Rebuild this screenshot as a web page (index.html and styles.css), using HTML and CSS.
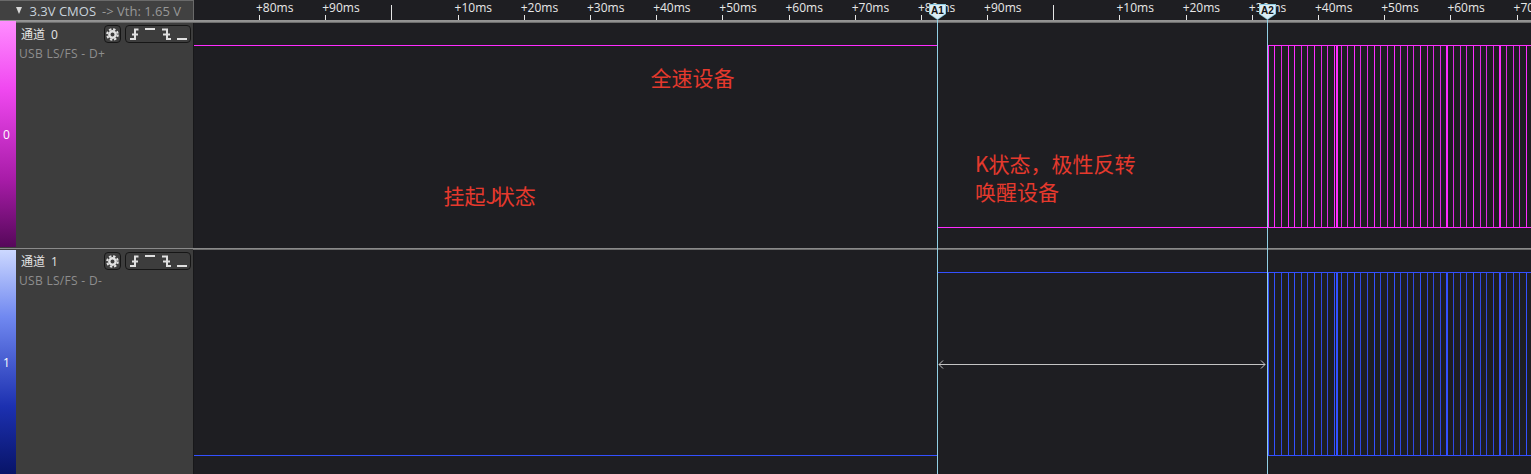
FILE: index.html
```html
<!DOCTYPE html>
<html lang="zh">
<head>
<meta charset="utf-8">
<title>Logic capture</title>
<link rel="stylesheet" href="styles.css">
</head>
<body>
<div class="app">
  <header class="top">
    <div class="group"><span class="tri"></span><span class="volt">3.3V CMOS</span><span class="vth">-&gt; Vth: 1.65 V</span></div>
    <div class="ruler">
      <div class="cell"><span>+80ms</span></div>
      <div class="cell"><span>+90ms</span></div>
      <div class="cell major"></div>
      <div class="cell"><span>+10ms</span></div>
      <div class="cell"><span>+20ms</span></div>
      <div class="cell"><span>+30ms</span></div>
      <div class="cell"><span>+40ms</span></div>
      <div class="cell"><span>+50ms</span></div>
      <div class="cell"><span>+60ms</span></div>
      <div class="cell"><span>+70ms</span></div>
      <div class="cell"><span>+80ms</span></div>
      <div class="cell"><span>+90ms</span></div>
      <div class="cell major"></div>
      <div class="cell"><span>+10ms</span></div>
      <div class="cell"><span>+20ms</span></div>
      <div class="cell"><span>+30ms</span></div>
      <div class="cell"><span>+40ms</span></div>
      <div class="cell"><span>+50ms</span></div>
      <div class="cell"><span>+60ms</span></div>
      <div class="cell"><span>+70ms</span></div>
    </div>
  </header>
  <div class="sep"></div>

  <section class="row">
    <aside class="side">
      <div class="strip strip0">0</div>
      <div class="info">
        <div class="head">
          <span class="name">通道 0</span>
          <span class="btn gear"><svg width="15" height="15" viewBox="0 0 15 15"><circle cx="7.5" cy="7.5" r="3.2" fill="none" stroke="#e2e2e2" stroke-width="2.4"/><circle cx="7.5" cy="7.5" r="5.3" fill="none" stroke="#e2e2e2" stroke-width="2" stroke-dasharray="2.4 1.76"/></svg></span>
          <span class="btn edges"><svg width="64" height="16" viewBox="0 0 64 16"><path d="M4 13H9V3.5H12.5M6 8.5H12M19 3H29M36 3.5H41V13H45M37 8.5H44M51 13H61" fill="none" stroke="#e0e0e0" stroke-width="2"/></svg></span>
        </div>
        <div class="desc">USB LS/FS - D+</div>
      </div>
    </aside>
    <div class="wave">
      <svg class="trace" width="1337" height="224" viewBox="0 0 1337 224">
        <path class="pink" d="M0 22.5H743.5M743.5 204.5H1073.5M1074.5 22V205M1074 22.5H1337M1074 204.5H1337"/>
        <path class="pink" d="M1080.5 22v183M1094.5 22v183M1100.5 22v183M1120.5 22v183M1140.5 22v183M1142.5 22v183M1143.5 22v183M1160.5 22v183M1180.5 22v183M1200.5 22v183M1226.5 22v183M1252.5 22v183M1253.5 22v183M1279.5 22v183M1305.5 22v183M1306.5 22v183M1332.5 22v183"/>
        <path class="pink dim" d="M1087.5 22v183M1107.5 22v183M1113.5 22v183M1127.5 22v183M1133.5 22v183M1147.5 22v183M1153.5 22v183M1166.5 22v183M1173.5 22v183M1186.5 22v183M1193.5 22v183M1206.5 22v183M1213.5 22v183M1219.5 22v183M1233.5 22v183M1239.5 22v183M1246.5 22v183M1259.5 22v183M1266.5 22v183M1272.5 22v183M1286.5 22v183M1292.5 22v183M1299.5 22v183M1312.5 22v183M1319.5 22v183M1325.5 22v183"/>
      </svg>
      <div class="note note-full">全速设备</div>
      <div class="note note-j">挂起<span class="tight">J</span>状态</div>
      <div class="note note-k">K状态，极性反转<br>唤醒设备</div>
    </div>
  </section>

  <div class="sep-row"><div class="sep-left"></div><div class="sep-right"></div></div>

  <section class="row">
    <aside class="side">
      <div class="strip strip1">1</div>
      <div class="info">
        <div class="head">
          <span class="name">通道 1</span>
          <span class="btn gear"><svg width="15" height="15" viewBox="0 0 15 15"><circle cx="7.5" cy="7.5" r="3.2" fill="none" stroke="#e2e2e2" stroke-width="2.4"/><circle cx="7.5" cy="7.5" r="5.3" fill="none" stroke="#e2e2e2" stroke-width="2" stroke-dasharray="2.4 1.76"/></svg></span>
          <span class="btn edges"><svg width="64" height="16" viewBox="0 0 64 16"><path d="M4 13H9V3.5H12.5M6 8.5H12M19 3H29M36 3.5H41V13H45M37 8.5H44M51 13H61" fill="none" stroke="#e0e0e0" stroke-width="2"/></svg></span>
        </div>
        <div class="desc">USB LS/FS - D-</div>
      </div>
    </aside>
    <div class="wave">
      <svg class="trace" width="1337" height="224" viewBox="0 0 1337 224">
        <path class="blue" d="M0 205.5H743.5M743.5 22.5H1073.5M1074.5 22V206M1074 22.5H1337M1074 205.5H1337"/>
        <path class="blue" d="M1080.5 22v184M1094.5 22v184M1100.5 22v184M1120.5 22v184M1140.5 22v184M1142.5 22v184M1143.5 22v184M1160.5 22v184M1180.5 22v184M1200.5 22v184M1226.5 22v184M1252.5 22v184M1253.5 22v184M1279.5 22v184M1305.5 22v184M1306.5 22v184M1332.5 22v184"/>
        <path class="blue dim" d="M1087.5 22v184M1107.5 22v184M1113.5 22v184M1127.5 22v184M1133.5 22v184M1147.5 22v184M1153.5 22v184M1166.5 22v184M1173.5 22v184M1186.5 22v184M1193.5 22v184M1206.5 22v184M1213.5 22v184M1219.5 22v184M1233.5 22v184M1239.5 22v184M1246.5 22v184M1259.5 22v184M1266.5 22v184M1272.5 22v184M1286.5 22v184M1292.5 22v184M1299.5 22v184M1312.5 22v184M1319.5 22v184M1325.5 22v184"/>
      </svg>
      <svg class="measure" width="330" height="9" viewBox="0 0 330 9"><path d="M1 4.5H327M5 0.5L1 4.5L5 8.5M323 0.5L327 4.5L323 8.5" fill="none" stroke="#c4c4c4"/></svg>
    </div>
  </section>

  <div class="cursor cursor-a1"><span class="flag">A1</span></div>
  <div class="cursor cursor-a2"><span class="flag">A2</span></div>
</div>
</body>
</html>
```
FILE: styles.css
```css
* { box-sizing: border-box; }
html, body { margin: 0; height: 100%; background: #1e1e22; overflow: hidden; }
body { font-family: "Open Sans", "Noto Sans CJK SC", sans-serif; font-size: 12px; }
.app { position: relative; width: 1531px; height: 474px; display: flex; flex-direction: column; overflow: hidden; }

.top { display: flex; height: 20px; flex: none; }
.group { flex: 0 0 194px; display: flex; align-items: center; background: #414141; border-right: 1px solid #6a6a6a; border-top: 1px solid #6a6a6a; padding-left: 16px; font-size: 13px; line-height: 16px; white-space: nowrap; }
.tri { width: 0; height: 0; border-left: 3.5px solid transparent; border-right: 3.5px solid transparent; border-top: 7px solid #d8d8d8; margin-right: 7.5px; }
.volt { color: #c9d3dc; }
.vth { color: #989898; margin-left: 6px; }

.ruler { flex: 1; display: flex; padding-left: 65px; overflow: hidden; background: #1e1e22; }
.cell { position: relative; flex: 0 0 66.2px; height: 20px; color: #e8e8e8; line-height: 16px; white-space: nowrap; }
.cell span { display: block; margin-left: -3px; }
.cell::before { content: ""; position: absolute; left: 0; bottom: 0; width: 1px; height: 5px; background: #e6e6e6; }
.cell.major::before { height: 15px; }

.sep { flex: none; height: 3px; background: linear-gradient(#8b8b8b, #a0a0a0 35%, #5c5c5c); }

.row { flex: none; height: 224px; display: flex; }
.side { flex: 0 0 194px; display: flex; background: #3d3d3d; border-right: 1px solid #18181a; }
.strip { flex: 0 0 16px; display: flex; align-items: center; padding-left: 3px; margin-top: -2px; color: #fff; }
.strip0 { background: linear-gradient(#ff8cff, #f048f0 30%, #a81ca8 70%, #56085a); }
.strip1 { background: linear-gradient(#ccd8ff, #7088f0 30%, #1c30b0 70%, #081468); margin-top: 0; }
.info { flex: 1; min-width: 0; }
.head { display: flex; align-items: flex-start; padding: 2px 0 0 5px; height: 23px; }
.name { color: #e4e4e4; line-height: 18px; width: 83px; padding-top: 1px; word-spacing: 3px; }
.btn { display: flex; align-items: center; justify-content: center; height: 18px; border: 1px solid #161616; border-radius: 4px; }
.gear { width: 17px; }
.edges { width: 66px; margin-left: 4px; }
.desc { color: #8e8e8e; padding-left: 3px; line-height: 16px; letter-spacing: .3px; }

.wave { position: relative; flex: 1; background: #1e1e22; overflow: hidden; }
.trace { display: block; }
.trace path { fill: none; stroke-width: 1; shape-rendering: crispEdges; }
.pink { stroke: #ff2cff; }
.blue { stroke: #3350ff; }
.trace .dim { opacity: .88; }

.sep-row { flex: none; display: flex; height: 3px; background: #1e1e22; }
.sep-left { flex: 0 0 193px; background: linear-gradient(#3d3d3d 33%, #8a8a8a 33%, #8a8a8a 66%, #3d3d3d 66%); }
.sep-right { flex: 1; background: linear-gradient(#1e1e22 33%, #9a9a9a 33%, #5c5c5c); }

.note { position: absolute; color: #e5392d; font-family: "Noto Sans CJK SC", sans-serif; font-size: 21px; line-height: 28px; white-space: nowrap; }
.tight { letter-spacing: -3px; }
.note-full { left: 456.5px; top: 40px; }
.note-j { left: 249.5px; top: 158px; }
.note-k { left: 781px; top: 126px; }

.measure { position: absolute; left: 744px; top: 110px; }

.cursor { position: absolute; top: 20px; bottom: 0; width: 1px; background: #92cfe4; }
.cursor-a1 { left: 937px; }
.cursor-a2 { left: 1267px; }
.flag { position: absolute; left: -8px; top: -16px; width: 17px; height: 16px; background: #8ccbe0; color: #111; font: 700 10px/13px "Liberation Sans", sans-serif; text-align: center; clip-path: polygon(0 0, 100% 0, 100% 62%, 50% 100%, 0 62%); }
.flag::before { content: ""; position: absolute; inset: 1px 1px 1px 1px; z-index: -1; background: #dcecf3; clip-path: polygon(0 0, 100% 0, 100% 62%, 50% 100%, 0 62%); }
```
